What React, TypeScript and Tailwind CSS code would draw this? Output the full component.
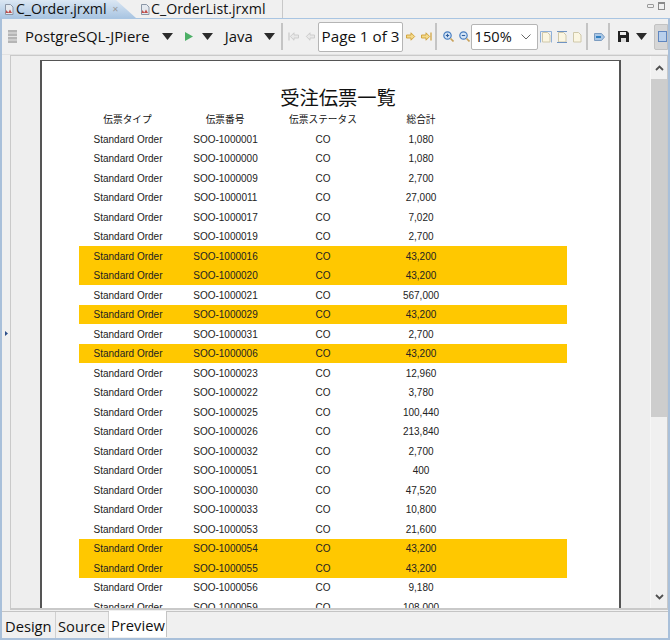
import React from "react";

const rows: [string, string, boolean][] = [
  ["SOO-1000001", "1,080", false],
  ["SOO-1000000", "1,080", false],
  ["SOO-1000009", "2,700", false],
  ["SOO-1000011", "27,000", false],
  ["SOO-1000017", "7,020", false],
  ["SOO-1000019", "2,700", false],
  ["SOO-1000016", "43,200", true],
  ["SOO-1000020", "43,200", true],
  ["SOO-1000021", "567,000", false],
  ["SOO-1000029", "43,200", true],
  ["SOO-1000031", "2,700", false],
  ["SOO-1000006", "43,200", true],
  ["SOO-1000023", "12,960", false],
  ["SOO-1000022", "3,780", false],
  ["SOO-1000025", "100,440", false],
  ["SOO-1000026", "213,840", false],
  ["SOO-1000032", "2,700", false],
  ["SOO-1000051", "400", false],
  ["SOO-1000030", "47,520", false],
  ["SOO-1000033", "10,800", false],
  ["SOO-1000053", "21,600", false],
  ["SOO-1000054", "43,200", true],
  ["SOO-1000055", "43,200", true],
  ["SOO-1000056", "9,180", false],
  ["SOO-1000059", "108,000", false],
];

const Tri = ({ className }: { className: string }) => (
  <svg viewBox="0 0 11 7" className={`w-[11px] h-[7px] shrink-0 ${className}`}>
    <path d="M0 0h11L5.5 7z" fill="#2b2b2b" />
  </svg>
);

const Sep = ({ className }: { className: string }) => (
  <div className={`w-[2px] h-[27px] bg-[#c4c4c4] shrink-0 ${className}`} />
);

const FileIcon = ({ className }: { className: string }) => (
  <svg viewBox="0 0 10 11" className={`w-[10px] h-[11px] shrink-0 ${className}`}>
    <path d="M1.5.5h5l2.5 2.5v7.5h-7.5z" fill="#e4e9ef" stroke="#8b96a6" />
    <path d="M2.5 6l2 3h-3z M6 5.5l2 3.5h-4z" fill="#c0504d" />
  </svg>
);

const Arrow = ({ color, stroke, flip, bar, className }: { color: string; stroke: string; flip?: boolean; bar?: boolean; className: string }) => (
  <svg viewBox="0 0 11 9" className={`w-[11px] h-[9px] shrink-0 ${className}`} style={flip ? { transform: "scaleX(-1)" } : undefined}>
    <path d="M.5 3h4.5V.8L8.7 4.5 5 8.2V6H.5z" fill={color} stroke={stroke} strokeWidth="0.9" />
    {bar && <path d="M10 .5v8" stroke={stroke} strokeWidth="1.2" />}
  </svg>
);

const Zoom = ({ plus, className }: { plus?: boolean; className: string }) => (
  <svg viewBox="0 0 11 11" className={`w-[11px] h-[11px] shrink-0 ${className}`}>
    <circle cx="4.5" cy="4.5" r="3.7" fill="#d6e6f7" stroke="#4a7fc0" strokeWidth="1.2" />
    <path d="M7.5 7.5l3 3" stroke="#c9a25a" strokeWidth="1.6" />
    <path d="M2.8 4.5h3.4" stroke="#2f5f9f" strokeWidth="1.1" />
    {plus && <path d="M4.5 2.8v3.4" stroke="#2f5f9f" strokeWidth="1.1" />}
  </svg>
);

const Doc = ({ variant, className }: { variant: 0 | 1 | 2; className: string }) => (
  <svg viewBox="0 0 12 12" className={`w-[12px] h-[12px] shrink-0 ${className}`}>
    <path d="M2.5 1.5h5l2.5 2.5v7h-7.5z" fill="#fbf6e2" stroke="#cfc8aa" />
    {variant === 0 && <path d="M.5.5h11M.5.5v11M11.5.5v11" stroke="#8fb0d8" fill="none" />}
    {variant === 1 && <path d="M1 .5h10M1 11.5h10" stroke="#6f93c2" fill="none" />}
  </svg>
);

export default function App() {
  return (
    <div className="w-[670px] h-[640px] flex flex-col overflow-hidden bg-[#f0f0f0] text-[#111] font-['Open_Sans','Noto_Sans',sans-serif]">
      <div className="h-[18px] flex items-start shrink-0 relative">
        <div className="w-[136px] h-[18px] flex items-center pl-[4px] bg-gradient-to-b from-[#dbe7f3] to-[#a9c5e2] [clip-path:polygon(0_0,116px_0,136px_100%,0_100%)]">
          <FileIcon className="" />
          <span className="ml-[2px] text-[14.2px] leading-[18px] tracking-[-0.1px]">C_Order.jrxml</span>
          <span className="ml-[6px] text-[8px] leading-[18px] text-[#999]">✕</span>
        </div>
        <div className="flex items-center h-[18px] ml-[4px]">
          <FileIcon className="" />
          <span className="ml-[1px] text-[14.2px] leading-[18px] w-[118px] whitespace-nowrap">C_OrderList.jrxml</span>
        </div>
        <div className="w-px h-[18px] bg-[#c8c8c8] ml-[13px]" />
        <div className="flex items-center gap-[4px] ml-auto mr-[5px] mt-[2px]">
          <div className="w-[7px] h-[4px] border border-[#9a9a9a] rounded-[1px]" />
          <div className="w-[7px] h-[8px] border border-[#8a8a8a] border-t-2" />
        </div>
      </div>

      <div className="flex-1 min-h-0 flex flex-col border-x-2 border-[#a9c0da] border-t border-t-[#a9c5e2]">
        <div className="h-[36px] shrink-0 flex items-center border-b border-[#e2e2e2]">
          <svg viewBox="0 0 9 13" className="w-[9px] h-[13px] ml-[6px] shrink-0">
            <rect width="9" height="13" fill="#b5b5b5" />
            <path d="M0 3h9M0 6.5h9M0 10h9" stroke="#e4e4e4" />
          </svg>
          <span className="ml-[8px] text-[14.9px] w-[126px] whitespace-nowrap">PostgreSQL-JPiere</span>
          <Tri className="ml-[12px]" />
          <svg viewBox="0 0 8 9" className="w-[8px] h-[9px] ml-[12px] shrink-0">
            <path d="M0 0l8 4.5L0 9z" fill="#4caf66" />
          </svg>
          <Tri className="ml-[9px]" />
          <span className="ml-[12px] text-[14.9px] w-[30px]">Java</span>
          <Tri className="ml-[11px]" />
          <Sep className="ml-[6px]" />
          <Arrow color="#e8e8e8" stroke="#c9c9c9" flip bar className="ml-[5px]" />
          <Arrow color="#e8e8e8" stroke="#c9c9c9" flip className="ml-[5px]" />
          <div className="ml-[3px] w-[88px] h-[30px] bg-white border border-[#b5b5b5] rounded-[2px] flex items-center justify-center text-[15.2px] whitespace-nowrap">
            Page 1 of 3
          </div>
          <Arrow color="#f3d98a" stroke="#cf9f35" className="ml-[3px]" />
          <Arrow color="#f3d98a" stroke="#cf9f35" bar className="ml-[4px]" />
          <Sep className="ml-[3px]" />
          <Zoom plus className="ml-[6px]" />
          <Zoom className="ml-[5px]" />
          <div className="ml-[1px] w-[70px] h-[26px] bg-white border border-[#b5b5b5] rounded-[2px] flex items-center justify-between pl-[3px] pr-[6px] text-[14.6px]">
            <span>150%</span>
            <svg viewBox="0 0 10 6" className="w-[10px] h-[6px]">
              <path d="M.5.5L5 5 9.5.5" fill="none" stroke="#666" />
            </svg>
          </div>
          <Doc variant={0} className="ml-[2px]" />
          <Doc variant={1} className="ml-[4px]" />
          <Doc variant={2} className="ml-[3px]" />
          <Sep className="ml-[3px]" />
          <svg viewBox="0 0 11 8" className="w-[11px] h-[8px] ml-[6px] shrink-0">
            <path d="M.5.5h7l3 3.5-3 3.5h-7z" fill="#a9c7e6" stroke="#7c9cc0" />
            <path d="M2 3h5v2H2z" fill="#2f7fc1" />
          </svg>
          <Sep className="ml-[3px]" />
          <svg viewBox="0 0 11 11" className="w-[11px] h-[11px] ml-[8px] shrink-0">
            <path d="M0 0h9l2 2v9H0z" fill="#222" />
            <path d="M2 1h6v3H2z" fill="#eee" />
            <path d="M3 7h5v4H3z" fill="#ddd" />
          </svg>
          <Tri className="ml-[7px]" />
          <div className="ml-[7px] w-[14px] h-[26px] bg-[#d6d6d6] border border-[#c2c2c2] rounded-l-[2px] flex items-center justify-end shrink-0">
            <div className="w-[9px] h-[11px] bg-[#b9d0ec] border border-[#5f86c0]" />
          </div>
        </div>

        <div className="flex-1 min-h-0 flex">
          <div className="w-[8px] shrink-0 flex items-center">
            <svg viewBox="0 0 3 5" className="w-[3px] h-[5px] ml-[3px] mt-[1px]">
              <path d="M0 0l3 2.5L0 5z" fill="#2d4f8a" />
            </svg>
          </div>
          <div className="flex-1 min-w-0 flex border border-[#c9c9c9] border-b-2 overflow-hidden bg-[#eeeeee] mb-[1px]">
            <div className="w-[29px] shrink-0" />
            <div className="w-[581px] shrink-0 pt-[4px] overflow-hidden">
              <div className="bg-white border-x-2 border-t-1 border-[#555] h-[600px] font-['Liberation_Sans','Noto_Sans_CJK_JP',sans-serif]">
                <div className="h-[24px]" />
                <div className="pl-[37px] w-[526px]">
                  <div className="h-[24px] text-center text-[19.3px] leading-[24px] w-[518px] font-['Noto_Sans_CJK_JP',sans-serif]">受注伝票一覧</div>
                  <div className="flex h-[20px] items-center text-[9.7px] font-['Noto_Sans_CJK_JP',sans-serif]">
                    <span className="w-[97px] text-center">伝票タイプ</span>
                    <span className="w-[98px] text-center">伝票番号</span>
                    <span className="w-[98px] text-center">伝票ステータス</span>
                    <span className="w-[98px] text-center">総合計</span>
                  </div>
                  <div className="w-[488px]">
                    {rows.map(([no, total, hi]) => (
                      <div key={no} className={`flex h-[19.5px] pt-px items-center text-[10px] text-[#222] ${hi ? "bg-[#ffc800]" : ""}`}>
                        <span className="w-[98px] text-center">Standard Order</span>
                        <span className="w-[97px] text-center">{no}</span>
                        <span className="w-[98px] text-center">CO</span>
                        <span className="w-[98px] text-center">{total}</span>
                      </div>
                    ))}
                  </div>
                </div>
              </div>
            </div>
            <div className="flex-1" />
            <div className="w-[17px] shrink-0 flex flex-col items-center bg-[#f0f0f0] border-l border-[#f6f6f6]">
              <div className="h-[23px] flex items-center justify-center shrink-0">
                <svg viewBox="0 0 9 6" className="w-[9px] h-[6px]"><path d="M1 5l3.5-3.5L8 5" fill="none" stroke="#505050" strokeWidth="1.8" /></svg>
              </div>
              <div className="w-full h-[338px] bg-[#cdcdcd] shrink-0" />
              <div className="flex-1" />
              <div className="h-[23px] flex items-center justify-center shrink-0">
                <svg viewBox="0 0 9 6" className="w-[9px] h-[6px]"><path d="M1 1l3.5 3.5L8 1" fill="none" stroke="#505050" strokeWidth="1.8" /></svg>
              </div>
            </div>
          </div>
        </div>

        <div className="h-[27px] shrink-0 flex border-t border-[#c4c4c4] text-[14.7px] leading-[28px]">
          <div className="w-[54px] border-r border-[#d0d0d0] pl-[3px]">Design</div>
          <div className="w-[53px] border-r border-[#d0d0d0] pl-[2px]">Source</div>
          <div className="w-[58px] bg-white border-r border-[#c4c4c4] pl-[2px] -mt-px h-[26px]">Preview</div>
        </div>
        <div className="h-[2px] bg-[#a9c0da] shrink-0 -mx-[2px]" />
      </div>
    </div>
  );
}
